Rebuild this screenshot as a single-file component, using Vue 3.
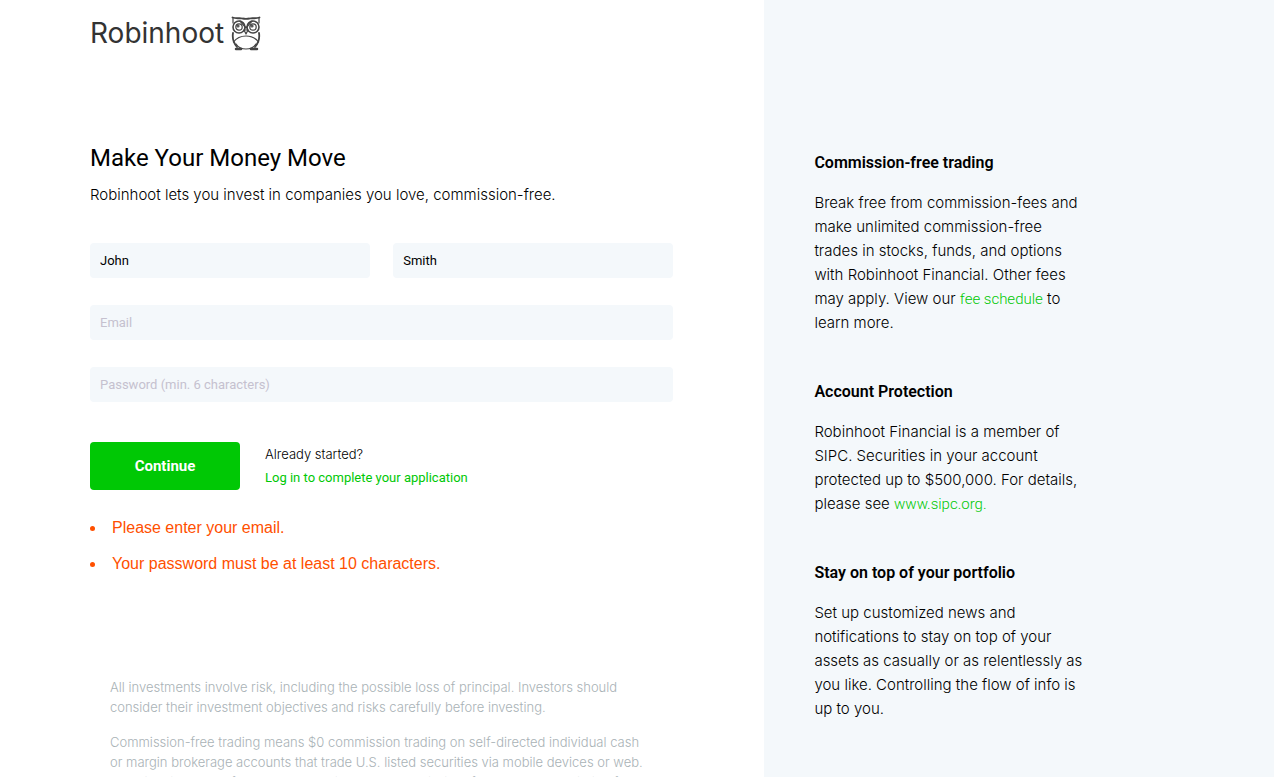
<script setup>
import { ref } from 'vue'

const firstName = ref('John')
const lastName = ref('Smith')
const email = ref('')
const password = ref('')
const errors = [
  'Please enter your email.',
  'Your password must be at least 10 characters.',
]
</script>

<template>
  <div class="page">
    <main class="signup">
      <a class="logo" href="#" aria-label="Robinhoot">
        <span>Robinhoot</span>
        <svg class="owl" viewBox="0 0 30 36" fill="none" stroke="#444" stroke-width="1.2" stroke-linecap="round" stroke-linejoin="round" aria-hidden="true">
          <path d="M1.500 2.500c4 1.500 7 .2 10 1 2 .4 5 .4 7 0 3-.8 6 .5 10-1" stroke-width="1.800" />
          <path d="M2 3v5M28 3v5" />
          <path d="M2 18c-.8 5 .5 10 4 14M28 18c.8 5-.5 10-4 14" stroke-width="1.800" />
          <circle cx="8" cy="12" r="6" stroke-width="1.600" />
          <circle cx="22" cy="12" r="6" stroke-width="1.600" />
          <circle cx="8" cy="12" r="3.200" />
          <circle cx="22" cy="12" r="3.200" />
          <circle cx="7" cy="11" r="1" />
          <circle cx="21" cy="11" r="1" />
          <path d="M9 6l6 7 6-7M13 15l2 4 2-4z" />
          <path d="M2.500 27c3-4 6-6 12.500-6s9.500 2 12.500 6M5 29c2 3 5 5 10 5s8-2 10-5" />
          <path d="M5 34h5M20 34h6" stroke-width="2.500" />
        </svg>
      </a>

      <h1>Make Your Money Move</h1>
      <p class="lead">Robinhoot lets you invest in companies you love, commission-free.</p>

      <form @submit.prevent>
        <div class="names">
          <input v-model="firstName" type="text" aria-label="First name" />
          <input v-model="lastName" type="text" aria-label="Last name" />
        </div>
        <input v-model="email" type="email" placeholder="Email" aria-label="Email" />
        <input v-model="password" type="password" placeholder="Password (min. 6 characters)" aria-label="Password" />
        <div class="actions">
          <button type="submit">Continue</button>
          <div class="login">
            <span>Already started?</span>
            <a href="#">Log in to complete your application</a>
          </div>
        </div>
      </form>

      <ul class="errors">
        <li v-for="error in errors" :key="error">{{ error }}</li>
      </ul>

      <div class="legal">
        <p>All investments involve risk, including the possible loss of principal. Investors should<br />consider their investment objectives and risks carefully before investing.</p>
        <p>Commission-free trading means $0 commission trading on self-directed individual cash<br />or margin brokerage accounts that trade U.S. listed securities via mobile devices or web.<br />Keep in mind, other fees such as trading (non-commission) fees, Gold subscription fees,</p>
      </div>
    </main>

    <aside class="info">
      <section>
        <h2>Commission-free trading</h2>
        <p>Break free from commission-fees and<br />make unlimited commission-free<br />trades in stocks, funds, and options<br />with Robinhoot Financial. Other fees<br />may apply. View our <a href="#">fee schedule</a> to<br />learn more.</p>
      </section>
      <section>
        <h2>Account Protection</h2>
        <p>Robinhoot Financial is a member of<br />SIPC. Securities in your account<br />protected up to $500,000. For details,<br />please see <a href="#">www.sipc.org.</a></p>
      </section>
      <section>
        <h2>Stay on top of your portfolio</h2>
        <p>Set up customized news and<br />notifications to stay on top of your<br />assets as casually or as relentlessly as<br />you like. Controlling the flow of info is<br />up to you.</p>
      </section>
    </aside>
  </div>
</template>

<style>
body {
  margin: 0;
  background: #fff;
}
</style>

<style scoped>
* {
  box-sizing: border-box;
}
.page {
  display: grid;
  grid-template-columns: 3fr 2fr;
  height: 100vh;
  overflow: hidden;
  color: #000;
  font-family: Inter, sans-serif;
  font-size: 15px;
  font-weight: 300;
  line-height: 24px;
}
h1, h2, p, ul {
  margin: 0;
}
a {
  color: #00c805;
  font-family: Roboto, sans-serif;
  font-weight: 400;
  text-decoration: none;
}
.signup {
  padding: 15px 91px 0 90px;
}
.logo {
  display: flex;
  align-items: center;
  gap: 7px;
  height: 36px;
  color: #333;
  font-family: Inter, sans-serif;
  font-size: 28px;
}
.owl {
  width: 30px;
  height: 36px;
}
h1 {
  margin-top: 91px;
  font-family: Roboto, sans-serif;
  font-size: 24px;
  font-weight: 400;
  line-height: 32px;
}
.lead {
  margin-top: 9px;
}
form {
  display: flex;
  flex-direction: column;
  gap: 27px;
  margin-top: 36px;
}
.names {
  display: grid;
  grid-template-columns: 1fr 1fr;
  gap: 23px;
}
input {
  width: 100%;
  height: 35px;
  padding: 0 10px;
  border: 0;
  border-radius: 4px;
  background: #f4f8fb;
  color: #000;
  font: 13px Roboto, sans-serif;
}
input::placeholder {
  color: #c5c1cf;
  opacity: 1;
}
.actions {
  display: flex;
  gap: 25px;
  margin-top: 13px;
}
button {
  width: 150px;
  height: 48px;
  border: 0;
  border-radius: 4px;
  background: #00c805;
  color: #fff;
  font: bold 15px Roboto, sans-serif;
}
.login {
  display: flex;
  flex-direction: column;
  font-size: 13px;
}
.errors {
  display: grid;
  gap: 12px;
  margin-top: 26px;
  padding: 0;
  color: #ff5000;
  font-family: "Liberation Sans", Arial, sans-serif;
  font-size: 16px;
  font-weight: 400;
  list-style: none;
}
.errors li {
  display: flex;
  align-items: center;
  gap: 17px;
}
.errors li::before {
  content: "";
  width: 5px;
  height: 5px;
  border-radius: 50%;
  background: #ff5000;
}
.legal {
  display: grid;
  gap: 15px;
  margin-top: 101px;
  padding-left: 20px;
  color: #a9b2b6;
  font-size: 13px;
  line-height: 20px;
  white-space: nowrap;
}
.info {
  display: flex;
  flex-direction: column;
  gap: 45px;
  padding: 151px 50px 0;
  background: #f4f8fb;
}
.info a {
  font-weight: 300;
}
h2 {
  margin-bottom: 16px;
  font-family: Roboto, sans-serif;
  font-size: 16px;
  font-weight: 600;
  line-height: 24px;
}
</style>
